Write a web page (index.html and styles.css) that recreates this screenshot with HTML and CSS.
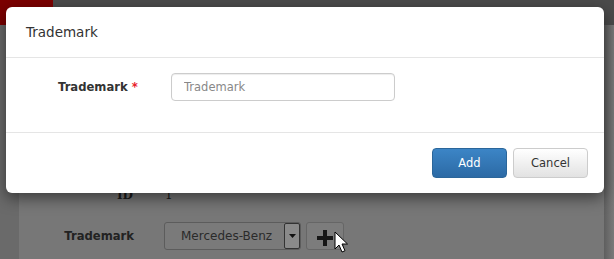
FILE: index.html
```html
<!DOCTYPE html>
<html>
<head>
<meta charset="utf-8">
<link rel="stylesheet" href="styles.css">
</head>
<body>
<div class="topbar"><div class="brand"></div></div>
<div class="page">
  <div class="side"></div>
  <div class="content">
    <div class="bg-row id-row"><span class="bg-label">ID</span><span class="bg-value">1</span></div>
    <div class="bg-row tm-row">
      <span class="bg-label">Trademark</span>
      <div class="bg-select"><span>Mercedes-Benz</span><span class="caret"><svg width="9" height="5" viewBox="0 0 9 5"><path d="M1 0h7L4.5 4z" fill="#111"/></svg></span></div>
      <div class="bg-btn"><svg width="18" height="18" viewBox="0 0 18 18"><path d="M7 1h4v6h6v4h-6v6H7v-6H1V7h6z" fill="#161616"/></svg></div>
      <svg class="cursor" width="14" height="22" viewBox="0 0 14 22"><path d="M1 1v17l4-4 3 7 3-1.3-3-6.7h5.5z" fill="#fff" stroke="#000" stroke-width="1"/></svg>
    </div>
  </div>
  <div class="rightcol"></div>
</div>

<div class="modal">
  <div class="modal-header">Trademark</div>
  <div class="modal-body">
    <label class="form-label">Trademark <span class="req">*</span></label>
    <input class="form-input" type="text" placeholder="Trademark">
  </div>
  <div class="modal-footer">
    <button class="btn btn-primary">Add</button>
    <button class="btn btn-default">Cancel</button>
  </div>
</div>
</body>
</html>
```
FILE: styles.css
```css
* { box-sizing: border-box; }
html, body { margin: 0; height: 100%; }
body {
  font-family: "DejaVu Sans", Verdana, sans-serif;
  font-size: 12px;
  background: #707070;
  overflow: hidden;
  position: relative;
}
.topbar {
  height: 25px;
  background: #4b4b4b;
  display: flex;
}
.brand {
  width: 53px;
  background: #7c0000;
}
.page {
  display: flex;
  height: 234px;
}
.side {
  width: 19px;
  background: #6a6a6a;
}
.content {
  flex: 1;
  background: #777;
  padding-top: 163px;
}
.rightcol {
  width: 10px;
  background: linear-gradient(to right, #5f5f5f, #7a7a7a);
}
.bg-row {
  display: flex;
  align-items: center;
  color: #1c1c1c;
}
.bg-label {
  width: 145px;
  text-align: right;
  padding-right: 30px;
  font-weight: bold;
}
.id-row .bg-label { font-family: "DejaVu Serif", serif; padding-right: 31px; }
.bg-value { padding-left: 1px; font-family: "DejaVu Serif", serif; }
.tm-row { margin-top: 20px; }
.tm-row .bg-label {
  font-size: 11.6px;
  color: #222;
}
.bg-select {
  width: 137px;
  height: 28px;
  border: 1px solid #5c5c5c;
  border-radius: 3px;
  background: #7a7a7a;
  display: flex;
  align-items: center;
  padding-left: 16px;
  color: #2a2a2a;
  font-size: 12px;
}
.bg-select span:first-child { flex: 1; }
.caret {
  width: 16px;
  height: 26px;
  border: 1px solid #333;
  border-radius: 2px;
  background: #8a8a8a;
  display: flex;
  align-items: center;
  justify-content: center;
}
.bg-btn {
  margin-left: 5px;
  width: 38px;
  height: 28px;
  border: 1px solid #666;
  border-radius: 3px;
  background: #7c7c7c;
  display: flex;
  align-items: center;
  justify-content: center;
  padding-top: 4px;
}
.cursor {
  position: relative;
  left: -10px;
  top: 6px;
}

.modal {
  position: absolute;
  left: 6px;
  top: 7px;
  width: 598px;
  background: #fff;
  border-radius: 6px;
  box-shadow: 0 5px 15px rgba(0,0,0,0.5);
  color: #333;
}
.modal-header {
  height: 51px;
  padding: 0 20px;
  display: flex;
  align-items: center;
  font-size: 13.5px;
  border-bottom: 1px solid #e5e5e5;
}
.modal-body {
  padding: 15px 0 31px;
  display: flex;
  align-items: center;
  border-bottom: 1px solid #e5e5e5;
}
.form-label {
  width: 165px;
  padding-left: 52px;
  font-weight: bold;
  font-size: 11.6px;
  color: #333;
}
.req { color: #e8202a; }
.form-input {
  width: 224px;
  height: 28px;
  border: 1px solid #ccc;
  border-radius: 4px;
  padding: 0 12px;
  font-family: "DejaVu Sans", sans-serif;
  font-size: 11.5px;
  color: #555;
  box-shadow: inset 0 1px 1px rgba(0,0,0,0.075);
  outline: none;
}
.form-input::placeholder { color: #888; }
.modal-footer {
  padding: 15px 16px 15px 0;
  display: flex;
  justify-content: flex-end;
  gap: 6px;
}
.btn {
  width: 75px;
  height: 30px;
  border-radius: 4px;
  font-family: "DejaVu Sans", sans-serif;
  font-size: 11.5px;
  padding: 0;
}
.btn-primary {
  color: #fff;
  background: linear-gradient(#3c85c6, #2c6aa5);
  border: 1px solid #2b669a;
}
.btn-default {
  color: #333;
  background: linear-gradient(#fff, #e2e2e2);
  border: 1px solid #ccc;
}
```
